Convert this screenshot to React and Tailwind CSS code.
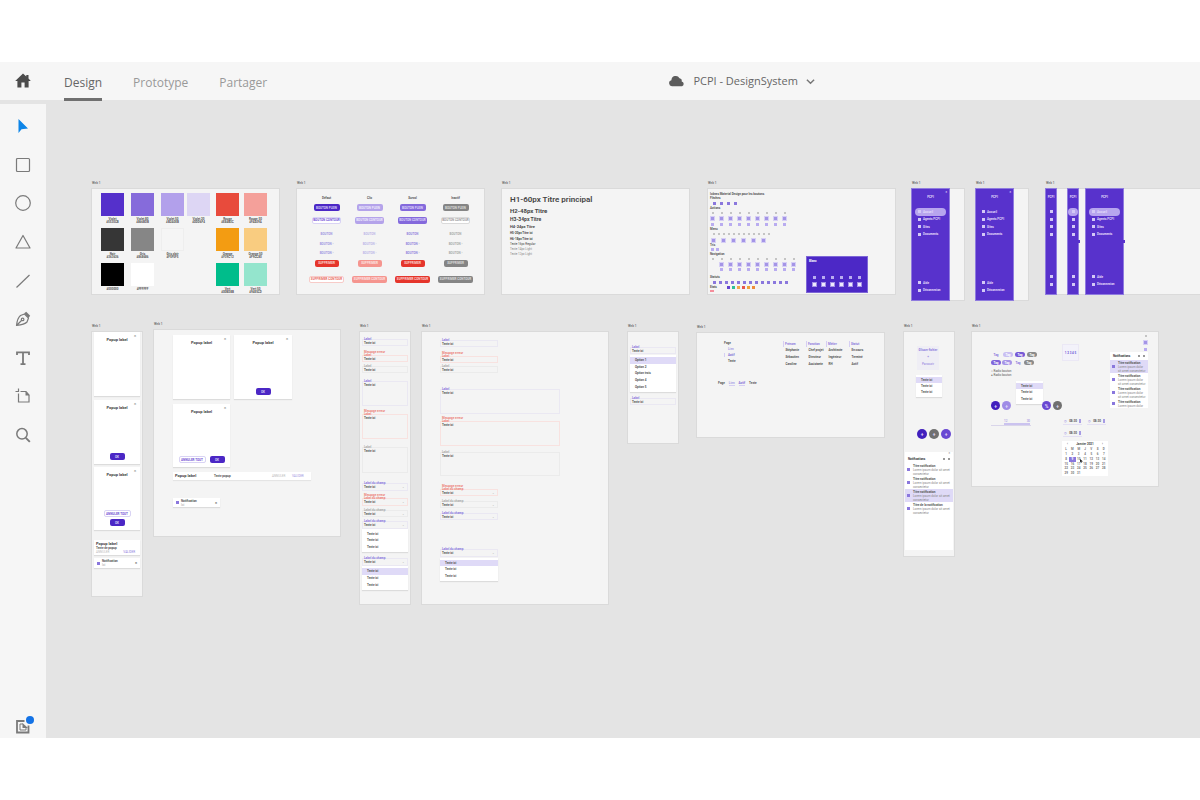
import React from "react";

/* ---------- shared pieces ---------- */

// Artboards sit freely on the canvas: at = [x, y, width, height]
function Artboard({ at, name = "Web 1", className = "", children }) {
  const [left, top, width, height] = at;
  return (
    <section className="absolute flex flex-col" style={{ left, top, width }}>
      <h2 className="h-2 shrink-0 text-[#777]">{name}</h2>
      <div className={`bg-[#f4f4f4] outline outline-[#dadada] ${className}`} style={{ height }}>
        {children}
      </div>
    </section>
  );
}

const pillTones = {
  violet: "bg-[#4b27c5] text-[#d9cffa]",
  mid: "bg-[#8469dc] text-[#dfd6fb]",
  lilac: "bg-[#b4a3ea] text-[#efeafd]",
  grey: "bg-[#858585] text-[#dcdcdc]",
  red: "bg-[#e5352b] text-[#fbd5d2]",
  pink: "bg-[#f5958f] text-[#fde4e2]",
  outlineViolet: "border border-[#d9d3f4] bg-white text-[#6f52d5]",
  outlineGrey: "border border-[#dadada] bg-white text-[#999]",
  outlineRed: "border border-[#f7cbc8] bg-white text-[#e8665d]",
};

function Pill({ tone, className = "", children }) {
  return (
    <span className={`flex h-[7px] items-center justify-center rounded-[2px] whitespace-nowrap ${pillTones[tone]} ${className}`}>
      {children}
    </span>
  );
}

const fieldTones = {
  violet: { box: "border-[#eae8f2]", label: "text-[#8c79dd]" },
  red: { box: "border-[#f8e2e0]", label: "text-[#ec7f77]" },
  grey: { box: "border-[#ebebeb]", label: "text-[#aaa]" },
};

function Field({ tone, select, className = "" }) {
  const { box, label } = fieldTones[tone];
  return (
    <div className={`shrink-0 border px-px whitespace-nowrap ${box} ${className}`}>
      <div className={`flex flex-col leading-[3px] ${tone === "red" ? "-mt-[5px]" : "-mt-[2px]"} ${label}`}>
        {tone === "red" && <span>Message erreur</span>}
        <span>{select ? "Label du champ" : "Label"}</span>
      </div>
      <div className="flex justify-between pr-px">
        <span>Texte ici</span>
        {select && <span className="text-[#aaa]">⌄</span>}
      </div>
    </div>
  );
}

function Menu({ marked, words = ["Texte ici", "Texte ici", "Texte ici"], className = "" }) {
  return (
    <ul className={`grid shrink-0 auto-rows-fr bg-white py-[2px] shadow-[0_1px_1px_#dcdcdc] ${className}`}>
      {words.map((word, i) => (
        <li key={i} className={marked && i === 0 ? "flex items-center bg-[#dfdaf7] pl-[5px]" : "flex items-center pl-[5px]"}>
          {word}
        </li>
      ))}
    </ul>
  );
}

function Card({ stacked, className = "", children }) {
  return (
    <article className={`flex shrink-0 flex-col items-center bg-white pt-[2px] pb-1 shadow-[0_1px_1px_#dcdcdc] ${className}`}>
      <span className="self-end pr-[4px] text-[4px] text-[#888]">×</span>
      <h3 className="text-[4px] text-[#444]">Popup label</h3>
      <div className={stacked ? "mt-auto flex flex-col items-center gap-[2px]" : "mt-auto flex gap-[4px]"}>{children}</div>
    </article>
  );
}

function Toast({ className = "" }) {
  return (
    <div className={`flex shrink-0 items-center gap-[2px] bg-white px-[3px] shadow-[0_1px_1px_#dcdcdc] ${className}`}>
      <span className="size-[3px] bg-[#8a77dd]" />
      <p className="leading-[4px]">
        Notification
        <br />
        <span className="text-[#bbb]">Ici</span>
      </p>
      <span className="ml-auto text-[4px]">×</span>
    </div>
  );
}

/* ---------- artboards ---------- */

const swatches = [
  ["bg-[#5530cb]", "Violet", "#5530CB"],
  ["bg-[#866bdb]", "Violet 80", "#866BDB"],
  ["bg-[#b2a0eb]", "Violet 50", "#B2A0EB"],
  ["bg-[#ddd6f4]", "Violet 20", "#DDD6F4"],
  ["bg-[#e84b3c]", "Rouge", "#E84B3C"],
  ["bg-[#f4a09a]", "Rouge 50", "#F4A09A"],
  ["bg-[#363636]", "Noir", "#363636"],
  ["bg-[#868686]", "Gris", "#868686"],
  ["border border-[#eeeeee] bg-[#f5f5f5]", "Gris clair", "#F5F5F5"],
  null,
  ["bg-[#f39c12]", "Orange", "#F39C12"],
  ["bg-[#f9cc80]", "Orange 50", "#F9CC80"],
  ["bg-black", "#000000"],
  ["bg-white", "#FFFFFF"],
  null,
  null,
  ["bg-[#00bd8b]", "Vert", "#00BD8B"],
  ["bg-[#94e5cd]", "Vert 50", "#94E5CD"],
];

function Colours() {
  return (
    <Artboard
      at={[46, 81, 187, 105]}
      className="grid auto-rows-[35px] grid-cols-[30px_30px_26px_29px_28px_23px] pt-1 pl-[9px]"
    >
      {swatches.map((swatch, i) =>
        swatch ? (
          <figure key={i} className="w-[23px]">
            <div className={`size-[23px] ${swatch[0]}`} />
            <figcaption className="flex flex-col pt-[2px] text-center leading-[3px]">
              <span>{swatch[1]}</span>
              <span>{swatch[2]}</span>
            </figcaption>
          </figure>
        ) : (
          <span key={i} />
        )
      )}
    </Artboard>
  );
}

const buttonRows = [
  ["w-[26px]", "BOUTON PLEIN", ["violet", "lilac", "mid", "grey"]],
  ["w-[29px]", "BOUTON CONTOUR", ["outlineViolet", "lilac", "mid", "outlineGrey"]],
  [null, "BOUTON"],
  [null, "BOUTON ›"],
  [null, "BOUTON ›"],
  ["w-[24px]", "SUPPRIMER", ["red", "pink", "red", "grey"]],
  ["w-[35px]", "SUPPRIMER CONTOUR", ["outlineRed", "pink", "red", "grey"]],
];

const ghostTones = ["text-[#a296e2]", "text-[#beb6e8]", "text-[#9484de]", "text-[#aaa]"];

function Buttons() {
  return (
    <Artboard
      at={[251, 81, 187, 105]}
      className="grid grid-cols-[repeat(4,43px)] grid-rows-[10px_9px_16px_11px_9px_9px_12px_20px] place-items-center justify-start pt-1 pl-2"
    >
      {["Défaut", "Clic", "Survol", "Inactif"].map((state) => (
        <h3 key={state}>{state}</h3>
      ))}
      {buttonRows.map(([width, label, tones], row) =>
        ghostTones.map((ghost, col) =>
          tones ? (
            <Pill key={`${row}-${col}`} tone={tones[col]} className={width}>{label}</Pill>
          ) : (
            <span key={`${row}-${col}`} className={ghost}>{label}</span>
          )
        )
      )}
    </Artboard>
  );
}

function Typography() {
  return (
    <Artboard at={[456, 81, 187, 105]} className="flex flex-col pt-1 pl-2 text-[#444]">
      <p className="text-[8px] leading-[14px] font-semibold">H1-60px Titre principal</p>
      <p className="text-[6px] leading-[8px]">H2-48px Titre</p>
      <p className="text-[5px] leading-[8px]">H3-34px Titre</p>
      <p className="text-[4px] leading-[8px]">H4-24px Titre</p>
      <p className="leading-[5px]">H5-20px Titre ici</p>
      <p className="leading-[6px]">H6-18px Titre ici</p>
      <p className="leading-[5px] font-normal">Texte 16px Regular</p>
      <p className="leading-[5px] font-normal text-[#888]">Texte 14px Light</p>
      <p className="leading-[5px] font-normal text-[#888]">Texte 12px Light</p>
    </Artboard>
  );
}

const dotTones = {
  grey: "size-[2px] bg-[#c4c4c4]",
  violet: "size-[3px] bg-[#8a77dd]",
  pale: "size-[3px] bg-[#b9acf0]",
  lilac: "size-[5px] border border-[#d6cff5] bg-[#a495e6]",
  white: "size-[5px] border border-[#a491e6] bg-[#efeafd]",
};

// A strip of evenly pitched icons; cell sets the pitch
function IconRow({ count, tone, cell = "w-[9px]", className = "h-[6px]" }) {
  return (
    <div className={`flex items-center ${className}`}>
      {Array.from({ length: count }, (_, i) => (
        <span key={i} className={`flex justify-center ${cell}`}>
          <span className={dotTones[tone]} />
        </span>
      ))}
    </div>
  );
}

function IconHeading({ className = "", children }) {
  return <h4 className={`pl-[2px] ${className}`}>{children}</h4>;
}

const stateColours = ["bg-[#6544d0]", "bg-[#2fbf95]", "bg-[#f3a94a]", "bg-[#e8584b]", "bg-[#f0a33a]", "bg-[#ee8a3a]"];

function Icons() {
  return (
    <Artboard at={[662, 81, 187, 105]} className="flex pt-[3px]">
      <div className="w-[99px] whitespace-nowrap">
        <IconHeading>Icônes Material Design pour les boutons</IconHeading>
        <IconHeading>Flèches</IconHeading>
        <IconRow count={4} tone="violet" cell="w-[7px]" className="h-[6px] pl-[3px]" />
        <IconHeading>Actions</IconHeading>
        <IconRow count={9} tone="grey" className="h-[5px]" />
        <IconRow count={9} tone="lilac" />
        <IconRow count={9} tone="pale" />
        <IconHeading>Menu</IconHeading>
        <IconRow count={12} tone="grey" cell="w-[5px]" className="h-[6px] pl-[3px]" />
        <IconRow count={6} tone="lilac" cell="w-[10px]" />
        <IconHeading>Tris</IconHeading>
        <IconRow count={2} tone="pale" cell="w-[5px]" className="h-[5px] pl-[2px]" />
        <IconHeading>Navigation</IconHeading>
        <IconRow count={10} tone="grey" className="h-[5px]" />
        <IconRow count={9} tone="lilac" className="h-[6px] pl-[9px]" />
        <IconRow count={9} tone="pale" className="h-[5px] pl-[9px]" />
        <IconHeading className="pt-[3px]">Statuts</IconHeading>
        <IconRow count={13} tone="violet" cell="w-[6px]" className="h-[6px] pl-[3px]" />
        <div className="flex items-center gap-[2px]">
          <IconHeading className="w-[17px]">Etats</IconHeading>
          {stateColours.map((tone) => (
            <span key={tone} className={`size-[3px] ${tone}`} />
          ))}
        </div>
        <div className="mt-px ml-[2px] h-[2px] w-[4px] bg-[#f58e9c]" />
      </div>
      <div className="mb-[2px] flex h-[35px] w-[60px] flex-col self-end bg-[#4c28c6] px-[2px] pt-[2px] pb-[4px] outline outline-[#7d66d6]">
        <h4 className="text-white">Blanc</h4>
        <IconRow count={6} tone="pale" className="mt-auto h-[6px] pl-px" />
        <IconRow count={6} tone="white" className="h-[8px] pl-px" />
      </div>
    </Artboard>
  );
}

const menuEntries = ["Accueil", "Agents PCPI", "Sites", "Documents"];
const footEntries = ["Aide", "Déconnexion"];

function NavEntry({ label, narrow, active }) {
  return (
    <li
      className={`flex items-center gap-[2px] rounded-full ${narrow ? "justify-center" : "mx-[3px] pl-[3px]"} ${active ? "bg-[#b7a5ee]" : ""}`}
    >
      <span className="size-[3px] bg-[#d3c8f6]" />
      {!narrow && <span>{label}</span>}
    </li>
  );
}

function NavPanel({ width = "w-[37px]", narrow, active, close, handle, className = "" }) {
  return (
    <div
      className={`relative flex h-full shrink-0 flex-col bg-[#5832cc] pt-px pb-[6px] whitespace-nowrap text-[#e4dcfb] outline outline-[#8f7bdf] ${width} ${className}`}
    >
      <div className="h-[5px] pr-[2px] text-right">{close && "×"}</div>
      <div className="h-[6px] text-center">PCPI</div>
      <ul className="mt-[7px] grid h-[30px] grid-rows-4">
        {menuEntries.map((label, i) => (
          <NavEntry key={label} label={label} narrow={narrow} active={active && i === 0} />
        ))}
      </ul>
      <ul className="mt-auto grid h-[15px] grid-rows-2">
        {footEntries.map((label) => (
          <NavEntry key={label} label={label} narrow={narrow} />
        ))}
      </ul>
      {handle && <span className="absolute top-[51px] -right-[2px] h-[3px] w-[2px] bg-[#5832cc]" />}
    </div>
  );
}

function Navigation() {
  return (
    <>
      <Artboard at={[866, 81, 52, 111]}>
        <NavPanel active close />
      </Artboard>
      <Artboard at={[930, 81, 52, 111]}>
        <NavPanel close />
      </Artboard>
      <Artboard at={[1000, 81, 190, 105]} className="flex">
        <NavPanel width="w-[10px]" narrow />
        <NavPanel width="w-[10px]" narrow active handle className="ml-[12px]" />
        <NavPanel active handle className="ml-[8px]" />
      </Artboard>
    </>
  );
}

function Popups() {
  return (
    <>
      <Artboard at={[46, 224, 50, 264]} className="flex flex-col px-[2px]">
        <Card className="h-[64px]" />
        <Card className="mt-1 h-[64px]">
          <Pill tone="violet" className="w-[15px]">OK</Pill>
        </Card>
        <Card stacked className="mt-[3px] h-[63px]">
          <Pill tone="outlineViolet" className="w-[27px]">ANNULER TOUT</Pill>
          <Pill tone="violet" className="w-[15px]">OK</Pill>
        </Card>
        <div className="mt-[10px] h-[15px] shrink-0 bg-white px-[2px] pt-px shadow-[0_1px_1px_#dcdcdc]">
          <h3 className="text-[4px] leading-[5px] text-[#444]">Popup label</h3>
          <p>Texte de popup</p>
          <div className="flex gap-[14px] font-normal text-[#bbb]">
            <span>ANNULER</span>
            <span className="text-[#8d7cdd]">VALIDER</span>
          </div>
        </div>
        <Toast className="mt-[3px] h-[10px]" />
      </Artboard>
      <Artboard at={[108, 222, 186, 206]} className="flex flex-col pt-[5px] pl-[19px]">
        <div className="grid grid-cols-[57px_58px] gap-x-[4px] gap-y-[5px]">
          <Card className="h-[64px]" />
          <Card className="h-[64px]">
            <Pill tone="violet" className="w-[15px]">OK</Pill>
          </Card>
          <Card className="h-[63px]">
            <Pill tone="outlineViolet" className="w-[27px]">ANNULER TOUT</Pill>
            <Pill tone="violet" className="w-[15px]">OK</Pill>
          </Card>
        </div>
        <div className="mt-[5px] grid h-2 w-[138px] grid-cols-[39px_58px_20px_auto] items-center bg-white pl-[2px] shadow-[0_1px_1px_#e4e4e4]">
          <h3 className="text-[4px] text-[#444]">Popup label</h3>
          <p>Texte popup</p>
          <span className="font-normal text-[#bbb]">ANNULER</span>
          <span className="font-normal text-[#a094e2]">VALIDER</span>
        </div>
        <Toast className="mt-[18px] h-[9px] w-[47px]" />
      </Artboard>
    </>
  );
}

function Forms() {
  return (
    <>
      <Artboard at={[314, 224, 50, 272]} className="flex flex-col px-[2px] pt-[7px]">
        <Field tone="violet" className="h-[7px]" />
        <Field tone="red" className="mt-[9px] h-[7px]" />
        <Field tone="grey" className="mt-[4px] h-[7px]" />
        <Field tone="violet" className="mt-[8px] h-[25px]" />
        <Field tone="red" className="mt-[8px] h-[25px]" />
        <Field tone="grey" className="mt-[8px] h-[26px]" />
        <Field tone="violet" select className="mt-[10px] h-[8px]" />
        <Field tone="red" select className="mt-[7px] h-[8px]" />
        <Field tone="grey" select className="mt-[4px] h-[7px]" />
        <Field tone="violet" select className="mt-[4px] h-[8px]" />
        <Menu className="h-[23px]" />
        <Field tone="violet" select className="mt-[6px] h-[8px]" />
        <Menu marked className="h-[24px]" />
      </Artboard>
      <Artboard at={[376, 224, 186, 272]} className="flex flex-col items-start pt-[8px] pl-[18px]">
        <Field tone="violet" className="h-[7px] w-[58px]" />
        <Field tone="red" className="mt-[9px] h-[7px] w-[58px]" />
        <Field tone="grey" className="mt-[3px] h-[7px] w-[58px]" />
        <Field tone="violet" className="mt-[16px] h-[25px] w-[120px]" />
        <Field tone="red" className="mt-[7px] h-[25px] w-[120px]" />
        <Field tone="grey" className="mt-[6px] h-[24px] w-[120px]" />
        <Field tone="red" select className="mt-[13px] h-[7px] w-[58px]" />
        <Field tone="grey" select className="mt-[5px] h-[7px] w-[58px]" />
        <Field tone="violet" select className="mt-[5px] h-[7px] w-[58px]" />
        <Field tone="violet" select className="mt-[29px] h-[8px] w-[58px]" />
        <Menu marked className="mt-px h-[23px] w-[58px]" />
      </Artboard>
    </>
  );
}

const people = [
  ["Stéphanie", "Chef projet", "Architecte", "En cours"],
  ["Sébastien", "Directeur", "Ingénieur", "Terminé"],
  ["Caroline", "Assistante", "RH", "Actif"],
];

function Lists() {
  return (
    <>
      <Artboard at={[582, 224, 50, 111]} className="flex flex-col px-[2px] pt-[15px]">
        <Field tone="violet" className="h-[7px]" />
        <Menu marked words={["Option 1", "Option 2", "Option trois", "Option 4", "Option 5"]} className="mt-px h-[37px]" />
        <Field tone="violet" className="mt-[6px] h-[7px]" />
      </Artboard>
      <Artboard at={[651, 225, 187, 104]} className="flex pt-[8px]">
        <div className="w-[86px] pl-[21px]">
          <ul className="ml-[6px] flex w-[10px] flex-col gap-[2px]">
            <li>Page</li>
            <li className="pl-[4px] text-[#a79ce4]">Lien</li>
            <li className="border-l border-[#d5cef3] pl-[3px] text-[#7d6ad6]">Actif</li>
            <li className="pl-[4px]">Texte</li>
          </ul>
          <nav className="mt-[18px] flex gap-[4px]">
            <span>Page</span>
            <span className="border-b border-[#d5cef3] text-[#a79ce4]">Lien</span>
            <span className="border-b border-[#d5cef3] text-[#7d6ad6]">Actif</span>
            <span>Texte</span>
          </nav>
        </div>
        <table className="table-fixed self-start text-left whitespace-nowrap">
          <thead>
            <tr className="leading-[6px] text-[#8c79dd]">
              <th className="w-[23px] border-l border-[#d5cef3] p-0 pl-px">Prénom</th>
              <th className="w-[20px] border-l border-[#d5cef3] p-0 pl-px">Fonction</th>
              <th className="w-[23px] border-l border-[#d5cef3] p-0 pl-px">Métier</th>
              <th className="w-[16px] border-l border-[#d5cef3] p-0 pl-px">Statut</th>
            </tr>
          </thead>
          <tbody>
            {people.map((cells) => (
              <tr key={cells[0]} className="leading-[7px]">
                {cells.map((cell) => (
                  <td key={cell} className="p-0 pl-[2px]">{cell}</td>
                ))}
              </tr>
            ))}
          </tbody>
        </table>
      </Artboard>
    </>
  );
}

function Notice({ title = "Titre notification", text = "Lorem ipsum dolor sit amet consectetur", marked, className = "h-[13px]" }) {
  return (
    <li className={`flex shrink-0 items-center gap-[3px] px-[2px] ${marked ? "bg-[#dfdaf7]" : ""} ${className}`}>
      <span className="size-[3px] shrink-0 bg-[#8a77dd]" />
      <div className="leading-[4px]">
        <h4 className="whitespace-nowrap">{title}</h4>
        <p className="font-normal text-[#888]">{text}</p>
      </div>
    </li>
  );
}

function Round({ tone, className = "size-[10px]", children }) {
  return (
    <span className={`flex shrink-0 items-center justify-center rounded-full text-[5px] text-[#e4dcfb] ${tone} ${className}`}>
      {children}
    </span>
  );
}

function Tag({ tone }) {
  return <span className={`flex h-[5px] w-[10px] items-center justify-center rounded-full ${tone}`}>Tag</span>;
}

function NoticeHeader() {
  return (
    <div className="flex h-[8px] shrink-0 items-center gap-[3px] px-[3px]">
      <h3 className="mr-auto text-[#333]">Notifications</h3>
      <span className="size-[2px] bg-[#999]" />
      <span className="size-[2px] bg-[#999]" />
    </div>
  );
}

function MobileComponents() {
  return (
    <Artboard at={[858, 224, 50, 224]} className="flex flex-col items-start pt-[14px]">
      <div className="ml-[13px] flex h-[24px] w-[22px] flex-col items-center gap-[3px] bg-[#efeef5] pt-[2px] font-normal whitespace-nowrap text-[#8c79dd]">
        <b>Glisser fichier</b>
        <span>+</span>
        <span>Parcourir</span>
      </div>
      <Menu marked className="mt-[5px] ml-[12px] h-[22px] w-[26px]" />
      <div className="mt-[32px] ml-[13px] flex gap-[2px]">
        <Round tone="bg-[#4120bd]">+</Round>
        <Round tone="bg-[#707070]">+</Round>
        <Round tone="bg-[#6948d2]">+</Round>
      </div>
      <div className="mx-px mt-[13px] h-[98px] bg-white">
        <div className="h-[3px] pr-[3px] text-right leading-[3px] text-[#999]">×</div>
        <NoticeHeader />
        <ul>
          <Notice />
          <Notice />
          <Notice marked />
          <Notice title="Titre de la notification" />
        </ul>
      </div>
    </Artboard>
  );
}

const weekDays = ["L", "M", "M", "J", "V", "S", "D"];
const monthDays = Array.from({ length: 31 }, (_, i) => i + 1);

function Calendar() {
  return (
    <div className="mt-1 flex h-[35px] w-[46px] flex-col bg-white px-px pt-px">
      <div className="flex justify-between px-1 text-[#444]">
        <span>‹</span>
        <span>Janvier 2021</span>
        <span>›</span>
      </div>
      <div className="mt-px grid flex-1 grid-cols-7 grid-rows-6 text-center text-[#777]">
        {weekDays.map((day, i) => (
          <span key={`day-${i}`}>{day}</span>
        ))}
        {monthDays.map((day) => (
          <span key={day} className={day === 9 ? "bg-[#8a77dd] text-white" : "relative"}>
            {day}
            {day === 10 && (
              <svg viewBox="0 0 6 8" className="absolute top-[2px] left-[4px] h-[4px] w-[3px]" aria-hidden="true">
                <path d="M0 0v7l2-2 1 3 1-.5L3 5h3z" fill="#222" />
              </svg>
            )}
          </span>
        ))}
      </div>
    </div>
  );
}

function WebComponents() {
  return (
    <Artboard at={[926, 224, 186, 154]} className="flex">
      <div className="w-[90px] pt-[20px] pl-[19px]">
        <div className="flex gap-[2px]">
          <Tag tone="text-[#8a77dd]" />
          <Tag tone="bg-[#c9bff2] text-white" />
          <Tag tone="bg-[#7659d6] text-white" />
          <Tag tone="bg-[#8b8b8b] text-white" />
        </div>
        <div className="mt-[3px] flex gap-px">
          <Tag tone="bg-[#8065da] text-white" />
          <Tag tone="bg-[#a795e7] text-white" />
          <Tag tone="text-[#8a77dd]" />
          <Tag tone="bg-[#8b8b8b] text-white" />
        </div>
        <div className="mt-[4px] flex flex-col font-normal">
          <span>○ Radio bouton</span>
          <span>● Radio bouton</span>
        </div>
        <Menu marked className="mt-[4px] ml-[25px] h-[23px] w-[27px]" />
        <div className="-mt-[3px] flex gap-[2px]">
          <Round tone="bg-[#4120bd]" className="size-[9px]">+</Round>
          <Round tone="bg-[#9f8ce6]" className="size-[9px]">+</Round>
          <Round tone="bg-[#6948d2]" className="ml-[29px] size-[9px]">%</Round>
          <Round tone="bg-[#707070]" className="size-[9px]">+</Round>
        </div>
        <div className="mt-[9px] w-[40px] border-b border-[#d9d5ea]">
          <div className="ml-[13px] flex w-[26px] justify-between border-b-2 border-[#cbc3ef] font-normal text-[#8c79dd]">
            <span>12</span>
            <span>30</span>
          </div>
        </div>
      </div>
      <div className="w-[48px] pt-[12px]">
        <div className="flex size-[17px] items-center justify-center border border-[#ebe8f5] bg-[#f3f2fa] text-[#6d55d8]">1 2 3 4 5</div>
        <div className="mt-[57px] grid grid-cols-[19px_19px] gap-[5px] pl-px">
          {[1, 2, 3].map((n) => (
            <div key={n} className="flex h-[7px] items-center justify-between border-b border-[#e4e0f3] px-px">
              <span className="text-[#a79ce4]">◷</span>
              <span>08:30</span>
              <span className="h-[4px] w-[2px] bg-[#a79ce4]" />
            </div>
          ))}
        </div>
        <Calendar />
      </div>
      <div className="flex w-[38px] flex-col">
        <div className="flex h-[20px] flex-col items-center gap-[3px] self-end pt-[3px]">
          <span className={dotTones.grey} />
          <span className={dotTones.lilac} />
          <span className={dotTones.pale} />
        </div>
        <div className="h-[56px] bg-white">
          <NoticeHeader />
          <ul>
            <Notice marked />
            <Notice />
            <Notice />
            <Notice text="Lorem ipsum dolor" className="h-[9px]" />
          </ul>
        </div>
      </div>
    </Artboard>
  );
}

/* ---------- application frame ---------- */

function Glyph({ children }) {
  return (
    <svg viewBox="0 0 18 18" className="h-[18px] w-[18px]" fill="none" stroke="currentColor" strokeWidth="1.2" aria-hidden="true">
      {children}
    </svg>
  );
}

const tools = [
  ["Sélection", <path d="M4.500 2v14l3-3.700 6.500-.8z" fill="#0d85e8" stroke="none" />],
  ["Rectangle", <rect x="2.500" y="2.500" width="13" height="13" rx="1" />],
  ["Ellipse", <circle cx="9" cy="9" r="7.300" />],
  ["Polygone", <path d="M9 2.500 16 15H2z" strokeLinejoin="round" />],
  ["Ligne", <path d="M2.500 15.500 15.500 3" />],
  [
    "Plume",
    <>
      <path d="M2.500 15.500C3 11 4 7.500 6.500 5.500L10.500 4l4 4-1.500 4c-2 2.300-6 3-10.500 3.500zM2.500 15.500l5-5" strokeLinejoin="round" />
      <circle cx="8.600" cy="9.400" r="1.300" />
      <path d="m10.200 3.200 2-1.400 4 4-1.600 2z" fill="currentColor" stroke="none" />
    </>,
  ],
  ["Texte", <path d="M3 6V3.300h12V6M9 3.300v12M6.500 15.200h5" strokeWidth="1.800" />],
  [
    "Plan de travail",
    <>
      <path d="M4.500 6.500v8.500h10.500V8L12 4.500H6.500M4.500 1.500v3H1.500" />
      <path d="M11.500 4.500V8.500h4z" fill="currentColor" stroke="none" />
    </>,
  ],
  [
    "Zoom",
    <>
      <circle cx="8" cy="7.800" r="5.200" strokeWidth="1.500" />
      <path d="m11.800 11.800 4 4" strokeWidth="1.900" />
    </>,
  ],
];

function Header() {
  return (
    <header className="z-10 flex h-[38px] shrink-0 items-stretch bg-[#f6f6f6] text-[12px] text-[#999]">
      <button type="button" aria-label="Accueil" className="flex w-[46px] items-center justify-center text-[#4c4c4c]">
        <svg viewBox="0 0 18 18" className="h-[18px] w-[18px]" fill="currentColor" aria-hidden="true">
          <path d="M9 1.500 1.200 9h2.200v6.500h4v-5h3.200v5h4V9h2.200L14.500 6.600V3h-2.200v1.500z" />
        </svg>
      </button>
      <nav className="-mb-px ml-[18px] flex gap-[31px]">
        <button type="button" className="border-b-[3px] border-[#707070] pt-[6px] font-medium text-[#666]">Design</button>
        <button type="button" className="pt-[6px] pb-[3px]">Prototype</button>
        <button type="button" className="pt-[6px] pb-[3px]">Partager</button>
      </nav>
      <div className="flex flex-1 items-center justify-center pl-4">
        <button type="button" className="flex items-center gap-2 text-[11px] font-medium text-[#666]">
          <svg viewBox="0 0 18 14" className="h-[14px] w-[17px]" fill="#5c5c5c" aria-hidden="true">
            <path d="M4.200 12.500a3.200 3.200 0 0 1-.6-6.300A4.600 4.600 0 0 1 12.200 4a3 3 0 0 1 2.300 3.500 2.600 2.600 0 0 1 .4 5z" />
          </svg>
          PCPI - DesignSystem
          <svg viewBox="0 0 10 10" className="h-[9px] w-[9px]" fill="none" stroke="#777" strokeWidth="1.600" aria-hidden="true">
            <path d="m1 3 4 4 4-4" />
          </svg>
        </button>
      </div>
    </header>
  );
}

function Toolbar() {
  return (
    <aside className="mt-1 flex w-[46px] shrink-0 flex-col items-center justify-between bg-[#f6f6f6] pt-[13px] pb-[3px] text-[#7a7a7a]">
      <div className="flex h-[327px] flex-col justify-between">
        {tools.map(([name, shape]) => (
          <button key={name} type="button" aria-label={name} title={name} className="h-[18px]">
            <Glyph>{shape}</Glyph>
          </button>
        ))}
      </div>
      <button type="button" aria-label="Bibliothèques" className="relative h-[18px]">
        <Glyph>
          <path d="M10.500 4H3v11.500h11.500V8.500" strokeWidth="1.800" />
          <path d="M6 7h3M6 7v6h6v-2" strokeWidth="1" />
          <path d="M8.500 6v5h5.500z" fill="currentColor" stroke="none" />
        </Glyph>
        <span className="absolute -top-px -right-[2px] h-2 w-2 rounded-full bg-[#1473e6]" />
      </button>
    </aside>
  );
}

export default function App() {
  return (
    <div className="flex h-screen flex-col bg-white py-[62px] font-['Open_Sans','Noto_Sans',sans-serif]">
      <Header />
      <div className="flex min-h-0 flex-1 bg-[#e4e4e4]">
        <Toolbar />
        <main className="relative min-w-0 flex-1 overflow-hidden font-[Roboto,sans-serif] text-[3px] leading-[4px] font-bold text-[#555]">
          <Colours />
          <Buttons />
          <Typography />
          <Icons />
          <Navigation />
          <Popups />
          <Forms />
          <Lists />
          <MobileComponents />
          <WebComponents />
        </main>
      </div>
    </div>
  );
}
